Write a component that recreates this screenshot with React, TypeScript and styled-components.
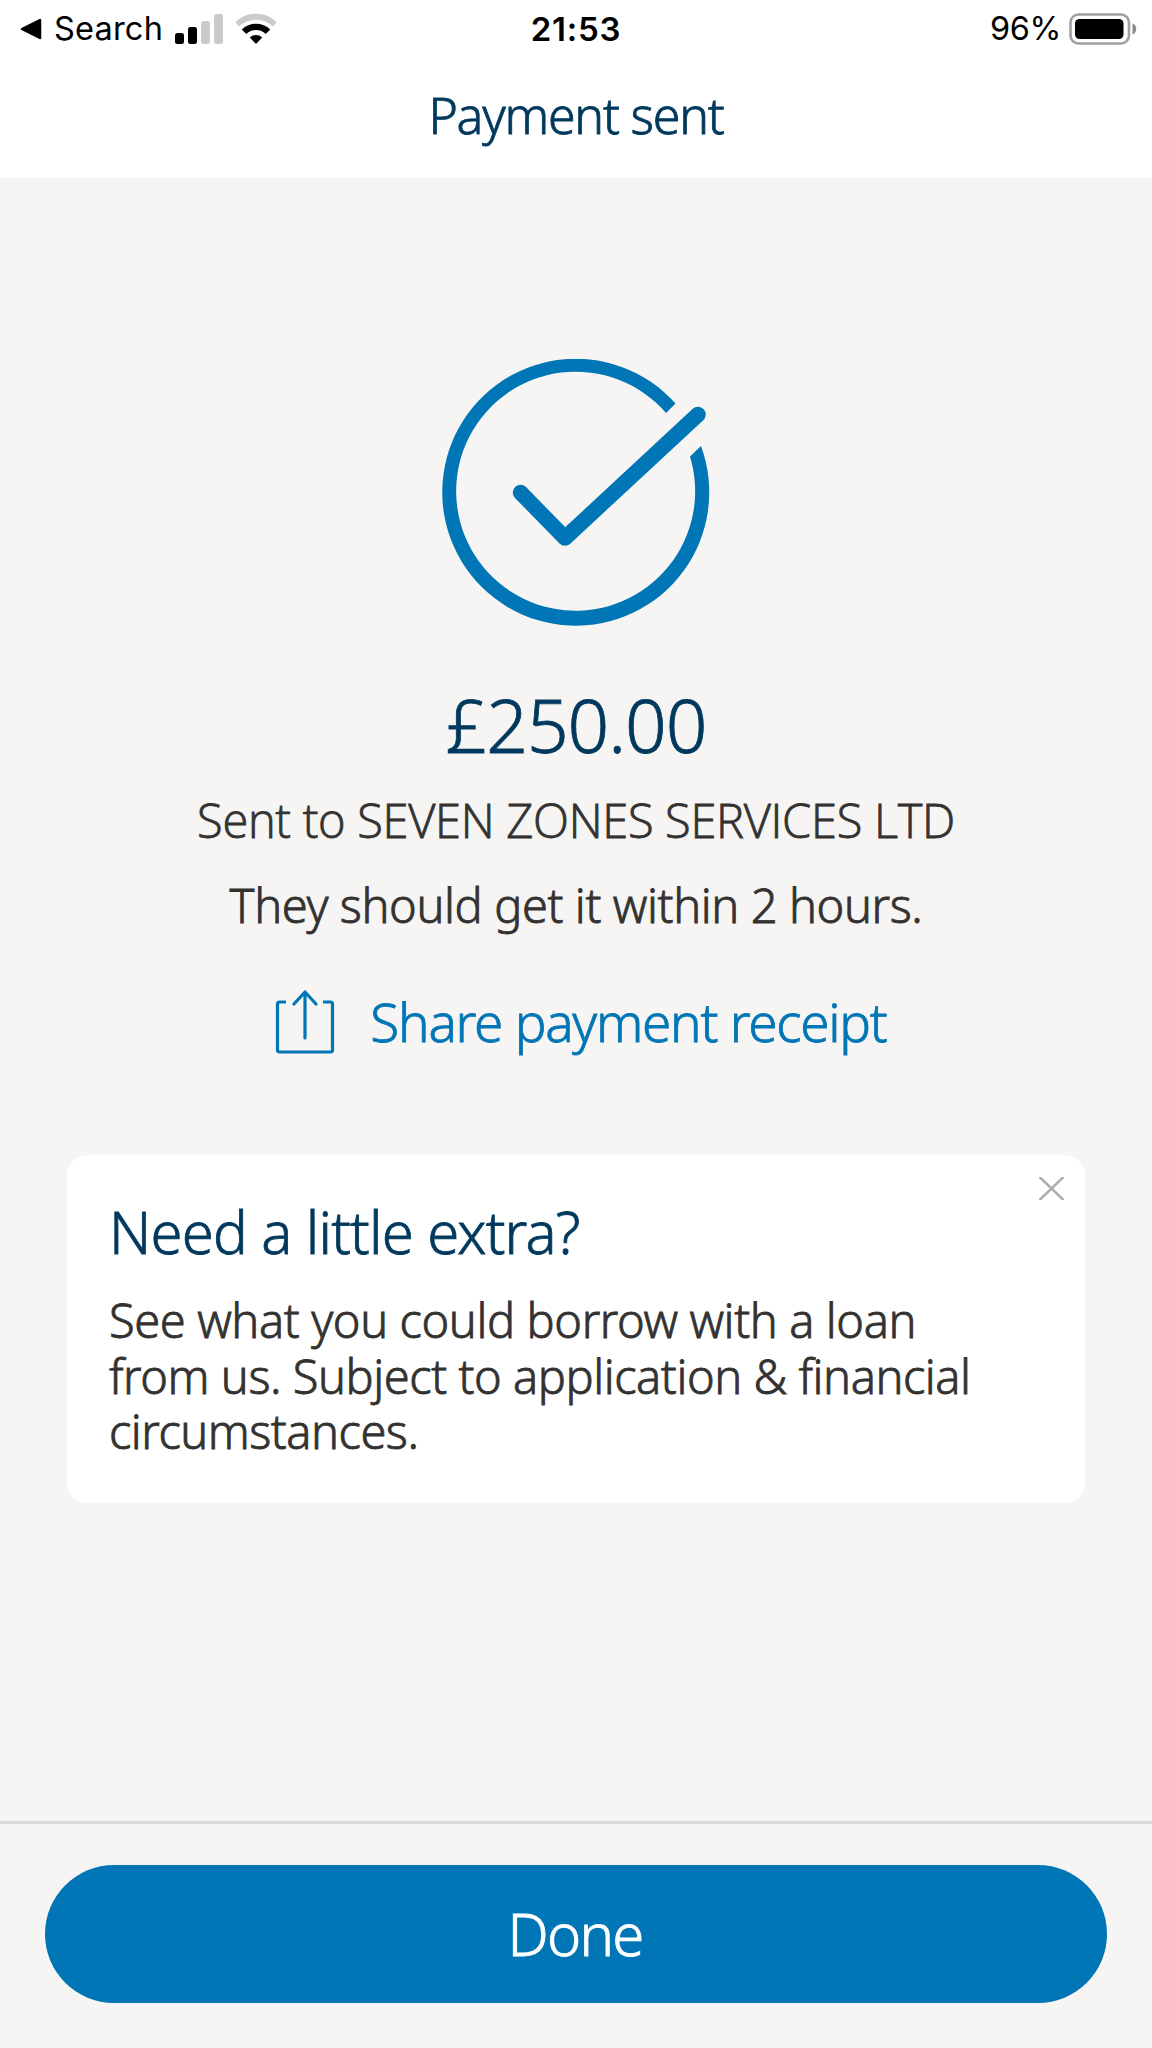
import React from "react";
import styled, { createGlobalStyle } from "styled-components";

const color = {
  page: "#f6f5f3",
  white: "#ffffff",
  navy: "#00395d",
  blue: "#0076b6",
  text: "#333231",
  line: "#d9d8d6",
};

const GlobalStyle = createGlobalStyle`
  * { box-sizing: border-box; }
  body { margin: 0; background: ${color.page}; }
  h1, h2, p { margin: 0; font-weight: inherit; }
  button { border: 0; padding: 0; background: none; font: inherit; color: inherit; cursor: pointer; }
  svg { display: block; flex: none; }
`;

const Screen = styled.div`
  width: 1152px;
  height: 2048px;
  display: flex;
  flex-direction: column;
  overflow: hidden;
  background: ${color.page};
  color: ${color.text};
  font-family: "Noto Sans", "Open Sans", sans-serif;
  font-weight: 300;
  -webkit-text-stroke: 0.8px currentColor;
`;

const Header = styled.header`
  height: 178px;
  background: ${color.white};
  display: flex;
  flex-direction: column;
`;

const StatusBar = styled.div`
  height: 58px;
  flex: none;
  padding: 0 15px;
  display: grid;
  grid-template-columns: 1fr auto 1fr;
  align-items: center;
  color: #000;
  font-family: Inter, Roboto, sans-serif;
  font-size: 32.5px;
  font-weight: 400;
  line-height: 58px;
  -webkit-text-stroke: 0;
`;

const StatusGroup = styled.div<{ $end?: boolean }>`
  display: flex;
  align-items: center;
  justify-content: ${(p) => (p.$end ? "flex-end" : "flex-start")};
  padding-left: ${(p) => (p.$end ? 0 : 5)}px;
`;

const BackLabel = styled.span`
  margin: 0 12px 0 12px;
  letter-spacing: 0.2px;
`;

const Clock = styled.span`
  font-size: 33px;
  font-weight: 600;
  letter-spacing: 0.7px;
`;

const Percent = styled.span`
  margin-right: 8px;
  letter-spacing: -0.4px;
`;

const Title = styled.h1`
  height: 114px;
  text-align: center;
  color: ${color.navy};
  font-size: 50px;
  line-height: 114px;
  letter-spacing: -1.2px;
`;

const Main = styled.main`
  flex: 1;
  display: flex;
  flex-direction: column;
  align-items: center;
  padding: 181px 67px 0;
`;

const Amount = styled.p`
  margin-top: 56px;
  color: ${color.navy};
  font-size: 73px;
  line-height: 84px;
  letter-spacing: -1px;
`;

const Detail = styled.p<{ $gap: number; $tracking: number; $plainCaps?: boolean }>`
  margin-top: ${(p) => p.$gap}px;
  font-family: ${(p) => (p.$plainCaps ? '"Open Sans", sans-serif' : "inherit")};
  font-size: 47px;
  line-height: 56px;
  letter-spacing: ${(p) => p.$tracking}px;
  white-space: nowrap;
`;

const ShareButton = styled.button`
  margin-top: 56px;
  display: flex;
  align-items: center;
  gap: 35px;
  color: ${color.blue};
  font-size: 53px;
  line-height: 64px;
  letter-spacing: -1.25px;
  padding-left: 10px;
`;

const Card = styled.section`
  position: relative;
  align-self: stretch;
  height: 348px;
  margin-top: 101px;
  padding: 44px 42px 0;
  border-radius: 20px;
  background: ${color.white};
`;

const CloseButton = styled.button`
  position: absolute;
  top: 22px;
  right: 21px;
`;

const CardTitle = styled.h2`
  color: ${color.navy};
  font-size: 58px;
  line-height: 66px;
  letter-spacing: -0.8px;
`;

const CardBody = styled.p`
  margin-top: 28px;
  font-size: 47px;
  line-height: 55.7px;
  white-space: nowrap;
`;

const Footer = styled.footer`
  height: 227px;
  padding: 41px 45px 0;
  border-top: 3px solid ${color.line};
`;

const DoneButton = styled.button`
  display: block;
  width: 100%;
  height: 138px;
  padding-right: 2px;
  border-radius: 69px;
  background: ${color.blue};
  color: ${color.white};
  font-size: 58px;
  line-height: 138px;
  letter-spacing: -1.7px;
`;

const Line = styled.span<{ $tracking: number }>`
  display: block;
  letter-spacing: ${(p) => p.$tracking}px;
`;

const BackArrow = () => (
  <svg width="22" height="22" viewBox="0 0 22 22">
    <path d="M2 11 L20 2 V20 Z" fill="#000" stroke="#000" strokeWidth="2.5" strokeLinejoin="round" />
  </svg>
);

const Signal = () => (
  <svg width="48" height="30" viewBox="0 0 48 30">
    <rect x="0" y="19" width="9" height="11" rx="2.5" />
    <rect x="13" y="13" width="9" height="17" rx="2.5" />
    <rect x="26" y="7" width="9" height="23" rx="2.5" fill="#cbcbcb" />
    <rect x="39" y="0" width="9" height="30" rx="2.5" fill="#cbcbcb" />
  </svg>
);

const WifiRow = styled.span`
  margin-left: 12px;
`;

const Wifi = () => (
  <svg width="42" height="32" viewBox="0 0 42 32" fill="none">
    <path d="M2.2 11.3 A27 27 0 0 1 39.8 11.3" stroke="#cbcbcb" strokeWidth="6" />
    <path d="M9 18.8 A17 17 0 0 1 33 18.8" stroke="#000" strokeWidth="6.4" />
    <path d="M21 31 L14.8 24.4 A9.5 9.5 0 0 1 27.2 24.4 Z" fill="#000" />
  </svg>
);

const Battery = () => (
  <svg width="68" height="32" viewBox="0 0 68 32">
    <rect x="1.5" y="1.5" width="58.5" height="29" rx="8" fill="none" stroke="#a0a0a0" strokeWidth="2.6" />
    <rect x="6" y="6" width="48.5" height="20" rx="4.5" />
    <path d="M63.5 10.5 C68.5 12 68.5 20 63.5 21.5 Z" fill="#8c8c8c" />
  </svg>
);

const SuccessMark = () => (
  <svg width="268" height="268" viewBox="442 359 268 268">
    <path
      d="M675.5 403.5 A133.5 133.5 0 1 0 701 446 L690 456.5 A119.5 119.5 0 1 1 666 413 Z"
      fill={color.blue}
    />
    <path
      d="M520.5 492.5 L565 538 L698 414.5"
      fill="none"
      stroke={color.blue}
      strokeWidth="15.5"
      strokeLinecap="round"
      strokeLinejoin="round"
    />
  </svg>
);

const ShareIcon = () => (
  <svg width="60" height="65" viewBox="0 0 60 65" fill="none" stroke={color.blue} strokeWidth="3.2">
    <path d="M11 13 H4.5 Q2.5 13 2.5 15 V61 Q2.5 63 4.5 63 H55.5 Q57.5 63 57.5 61 V15 Q57.5 13 55.5 13 H48" />
    <path d="M30 49 V3 M19 15 L30 3 L41 15" strokeLinecap="round" strokeLinejoin="round" />
  </svg>
);

const CloseIcon = () => (
  <svg width="25" height="23" viewBox="0 0 25 23">
    <path d="M0.5 0 L24.5 23 M24.5 0 L0.5 23" stroke="#adadad" strokeWidth="2.6" />
  </svg>
);

export default function App() {
  return (
    <>
      <GlobalStyle />
      <Screen>
        <Header>
          <StatusBar>
            <StatusGroup>
              <BackArrow />
              <BackLabel>Search</BackLabel>
              <Signal />
              <WifiRow>
                <Wifi />
              </WifiRow>
            </StatusGroup>
            <Clock>21:53</Clock>
            <StatusGroup $end>
              <Percent>96%</Percent>
              <Battery />
            </StatusGroup>
          </StatusBar>
          <Title>Payment sent</Title>
        </Header>
        <Main>
          <SuccessMark />
          <Amount>£250.00</Amount>
          <Detail $gap={25} $tracking={-0.3} $plainCaps>Sent to SEVEN ZONES SERVICES LTD</Detail>
          <Detail $gap={29} $tracking={-0.4}>They should get it within 2 hours.</Detail>
          <ShareButton>
            <ShareIcon />
            Share payment receipt
          </ShareButton>
          <Card>
            <CardTitle>Need a little extra?</CardTitle>
            <CardBody>
              <Line $tracking={-0.4}>See what you could borrow with a loan</Line>
              <Line $tracking={-0.45}>from us. Subject to application &amp; financial</Line>
              <Line $tracking={-0.5}>circumstances.</Line>
            </CardBody>
            <CloseButton aria-label="Close">
              <CloseIcon />
            </CloseButton>
          </Card>
        </Main>
        <Footer>
          <DoneButton>Done</DoneButton>
        </Footer>
      </Screen>
    </>
  );
}
